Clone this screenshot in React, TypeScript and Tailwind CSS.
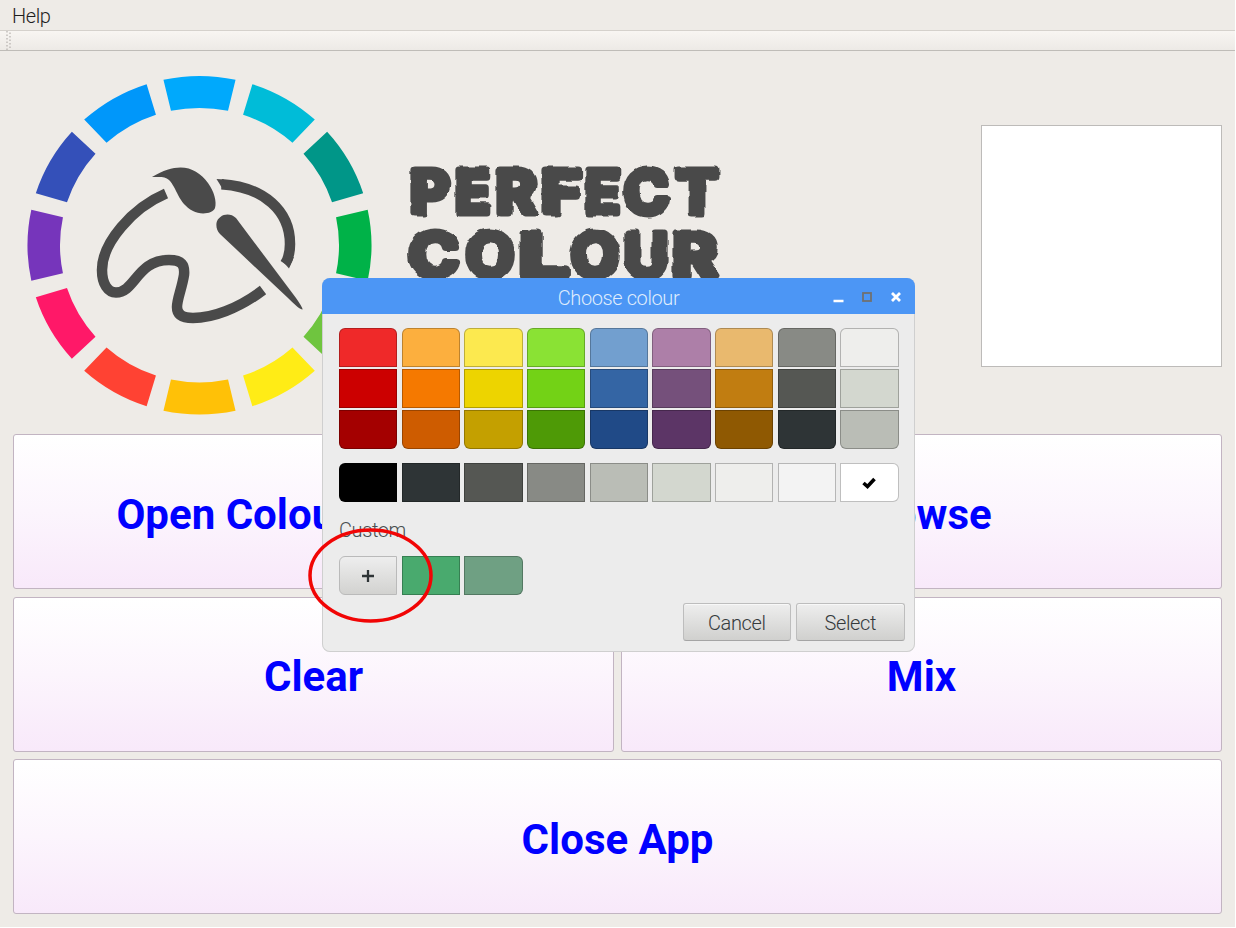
const RING_COLOURS = [
  '#00a9fc', '#00bcd8', '#009688', '#00b248', '#6fc53f', '#ffec16',
  '#ffc107', '#ff4233', '#ff1868', '#7635bb', '#3450b9', '#0097fa',
];

const PALETTE = [
  ['#ef2929', '#fcaf3e', '#fce94f', '#8ae234', '#729fcf', '#ad7fa8', '#e9b96e', '#888a85', '#eeeeec'],
  ['#cc0000', '#f57900', '#edd400', '#73d216', '#3465a4', '#75507b', '#c17d11', '#555753', '#d3d7cf'],
  ['#a40000', '#ce5c00', '#c4a000', '#4e9a06', '#204a87', '#5c3566', '#8f5902', '#2e3436', '#babdb6'],
];

const GREYS = ['#000000', '#2e3436', '#555753', '#888a85', '#babdb6', '#d3d7cf', '#eeeeec', '#f3f3f3', '#ffffff'];

type Glyph = [string, number, number];

const LINE_ONE: Glyph[] = [['P', 410, 40], ['E', 455, 35], ['R', 496, 40], ['F', 541, 40], ['E', 585, 35], ['C', 624, 45], ['T', 676, 42]];
const LINE_TWO: Glyph[] = [['C', 409, 50], ['O', 466, 48], ['L', 519, 49], ['O', 571, 48], ['U', 624, 44], ['R', 672, 45]];

function segmentPath(index: number) {
  const at = (radius: number, deg: number) => {
    const a = (deg * Math.PI) / 180;
    return `${(199.5 + radius * Math.sin(a)).toFixed(2)} ${(245.2 - radius * 0.984 * Math.cos(a)).toFixed(2)}`;
  };
  const mid = index * 30;
  return `M${at(172, mid - 12.1)}A172 169.2 0 0 1 ${at(172, mid + 12.1)}L${at(139.5, mid + 11.8)}A139.5 137.3 0 0 0 ${at(139.5, mid - 11.8)}Z`;
}

function Logo() {
  return (
    <svg className="h-[380px] w-[740px] shrink-0" viewBox="0 52 740 380" aria-label="Perfect Colour">
      <defs>
        <filter id="rough" filterUnits="userSpaceOnUse" x="395" y="150" width="340" height="150">
          <feTurbulence type="fractalNoise" baseFrequency="0.09" numOctaves="1" seed="8" />
          <feDisplacementMap in="SourceGraphic" scale="5" xChannelSelector="R" yChannelSelector="G" />
        </filter>
      </defs>
      {RING_COLOURS.map((c, i) => <path key={c} d={segmentPath(i)} fill={c} />)}
      <g fill="none" stroke="#4a4a4a" strokeWidth="10.5">
        <path d="M166 193.500C132 208 102 243 102 270C102 284 108 292.500 116 292.500C135 292.500 137 260 169 260C182 260 185 265 184 275C182 288 177 299 177 307C177 315 183 318 193 318C212 318 238 309 263 290" />
        <path d="M221.500 184.200C264 187 290 211 290 244C290 253 289 258 285 264" />
      </g>
      <g fill="#4a4a4a">
        <path d="M152 177C179 161 196 167 208 183C214 191 217 202 215 208C213 214 200 215 193 211C178 203 177 188 169 180C165 176 159 177 152 177Z" />
        <path d="M236 218C229 211 218 215 216.500 223C216 227 217 231 220 234L288 298Q300 310 302.500 309.500Q303 308 296 298Z" />
        <path d="M216.500 179L223 189.500L224 179.500Z" />
        <path d="M281.500 260L289 268.500L294 257Z" />
      </g>
      <g
        fill="#4a4a4a" stroke="#4a4a4a" strokeWidth="7" strokeLinejoin="round" filter="url(#rough)"
        className="font-['Inter'] font-bold" fontSize="59"
      >
        {LINE_ONE.map(([ch, x, w], i) => (
          <text key={i} x={x} y="213" textLength={w} lengthAdjust="spacingAndGlyphs">{ch}</text>
        ))}
        {LINE_TWO.map(([ch, x, w], i) => (
          <text key={i} x={x} y="276" textLength={w} lengthAdjust="spacingAndGlyphs">{ch}</text>
        ))}
      </g>
    </svg>
  );
}

function BigButton({ label, wide = false }: { label: string; wide?: boolean }) {
  return (
    <button
      className={`flex items-center justify-center rounded-[3px] border border-[#c2b4c2] bg-linear-to-b from-white via-[#fcf5fd] to-[#f8e9fa] pt-[6px] text-[42px] leading-none font-bold text-[#0000ff] ${wide ? 'col-span-2' : ''}`}
    >
      {label}
    </button>
  );
}

function Swatch({ colour, round = '', children }: { colour: string; round?: string; children?: React.ReactNode }) {
  return (
    <div className={`flex h-[39px] items-center justify-center border border-black/25 ${round}`} style={{ backgroundColor: colour }}>
      {children}
    </div>
  );
}

function DialogButton({ label }: { label: string }) {
  return (
    <button className="h-[38px] w-[108.500px] rounded-[3px] border border-[#bdbdbd] border-b-[#a5a5a5] bg-linear-to-b from-[#eeeeee] to-[#d0d0ce] pt-[2px] text-[20px] leading-none font-light tracking-[-0.4px] text-[#353a3c] shadow-[inset_0_1px_0_#f8f8f8]">
      {label}
    </button>
  );
}

function ColourDialog() {
  return (
    <section className="absolute top-[278px] left-[322px] flex h-[374px] w-[593px] flex-col overflow-hidden rounded-lg bg-[#ececec] shadow-[inset_0_0_0_1px_#cfcfcf]">
      <header className="grid h-9 shrink-0 grid-cols-[1fr_auto_1fr] items-center bg-[#4c96f5] text-[20px] leading-none font-light tracking-[-0.4px] text-[#dfecfd]">
        <span />
        <span className="pt-[3px]">Choose colour</span>
        <svg className="mt-px mr-[13px] h-3 w-[70px] justify-self-end" viewBox="0 0 70 12">
          <path d="M1.500 10H11.500" stroke="#fff" strokeWidth="2.600" />
          <rect x="31" y="2" width="8" height="8" fill="none" stroke="#707070" strokeWidth="1.800" />
          <path d="M60 2L68 10M68 2L60 10" stroke="#fff" strokeWidth="2.800" />
        </svg>
      </header>
      <div className="flex flex-1 flex-col pt-[14px] pr-[16.500px] pl-[17px]">
        <div className="flex flex-col gap-[2px]">
          {PALETTE.map((row, r) => (
            <div key={r} className="grid grid-cols-9 gap-x-[4.500px]">
              {row.map((c) => (
                <Swatch key={c} colour={c} round={r === 0 ? 'rounded-t-[6px]' : r === 2 ? 'rounded-b-[6px]' : ''} />
              ))}
            </div>
          ))}
        </div>
        <div className="mt-[14px] grid grid-cols-9 gap-x-[4.500px]">
          {GREYS.map((c, i) => (
            <Swatch key={c} colour={c} round={i === 0 ? 'rounded-l-[6px]' : i === 8 ? 'rounded-r-[6px]' : ''}>
              {i === 8 && (
                <svg className="h-3 w-[14px]" viewBox="0 0 14 12">
                  <path d="M1.500 6L5.500 9.500L12.500 2" fill="none" stroke="#000" strokeWidth="3.600" />
                </svg>
              )}
            </Swatch>
          ))}
        </div>
        <div className="mt-[16px] h-[26px] text-[20px] leading-6 font-light tracking-[-0.4px] text-[#4a4f51]">Custom</div>
        <div className="mt-[12px] grid grid-cols-9 gap-x-[4.500px]">
          <button className="flex h-[39px] items-center justify-center rounded-l-[6px] border border-[#bababa] bg-linear-to-b from-[#eeeeee] to-[#d2d2d0]">
            <svg className="size-3" viewBox="0 0 12 12">
              <path d="M0 6H12M6 0V12" stroke="#2e3436" strokeWidth="2.300" />
            </svg>
          </button>
          <Swatch colour="#49aa6e" />
          <Swatch colour="#6fa083" round="rounded-r-[6px]" />
        </div>
        <footer className="mt-[8px] -mr-[6px] flex justify-end gap-[5px]">
          <DialogButton label="Cancel" />
          <DialogButton label="Select" />
        </footer>
      </div>
    </section>
  );
}

export default function App() {
  return (
    <div className="h-[928px] w-[1236px] overflow-hidden bg-white font-['Roboto',sans-serif]">
      <div className="relative flex h-[927px] w-[1235px] flex-col overflow-hidden bg-[#eeebe7]">
        <nav className="flex h-[30px] shrink-0 items-center px-[12px] pt-[2px] text-[20px] leading-none font-light tracking-[-0.4px] text-[#1e1e1e]">Help</nav>
        <div className="flex h-[21px] shrink-0 items-center border-t border-b border-t-[#d5d1cc] border-b-[#bfbcb8] bg-linear-to-b from-[#f8f5f2] to-[#edeae6] pl-[6px]">
          <svg className="h-[19px] w-[6px]" viewBox="0 0 6 19">
            <path d="M1 0V19M4 1.500V19" stroke="#b4b0ac" strokeWidth="1.200" strokeDasharray="1.500 2" />
          </svg>
        </div>
        <main className="flex flex-1 flex-col">
          <div className="flex h-[383px] shrink-0 items-start justify-between pt-px pr-[13px]">
            <Logo />
            <div className="mt-[73px] h-[242px] w-[241px] border border-[#bdbbb9] bg-white" />
          </div>
          <div className="grid grid-cols-2 grid-rows-[155px_155px_155px] gap-x-[7px] gap-y-[7.500px] px-[13px]">
            <BigButton label="Open Colour Window" />
            <BigButton label="Browse" />
            <BigButton label="Clear" />
            <BigButton label="Mix" />
            <BigButton label="Close App" wide />
          </div>
        </main>
        <ColourDialog />
        <svg className="absolute top-[526px] left-[306px] h-[100px] w-[130px]" viewBox="0 0 130 100">
          <ellipse cx="64.500" cy="49.500" rx="60.500" ry="45.500" fill="none" stroke="#f10505" strokeWidth="3.500" />
        </svg>
      </div>
    </div>
  );
}
